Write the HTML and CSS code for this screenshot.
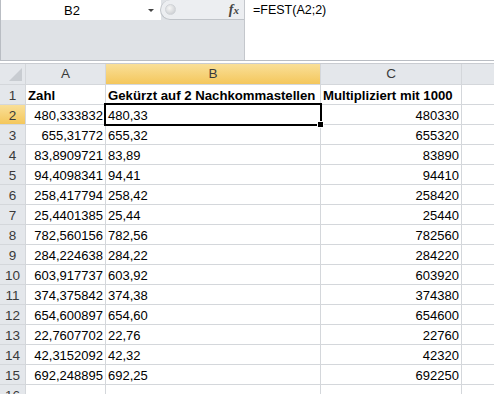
FILE: index.html
```html
<!DOCTYPE html>
<html lang="de">
<head>
    <meta charset="UTF-8">
    <title>FEST</title>
    <link rel="stylesheet" href="styles.css">
</head>
<body>
<div class="formula-bar">
    <div class="name-side">
        <div class="name-row">
            <div class="name-box">
                <span class="cell-ref">B2</span>
                <span class="arrow"></span>
            </div>
            <div class="knob-area">
                <span class="knob"></span>
                <span class="fx">f<i>x</i></span>
            </div>
        </div>
    </div>
    <div class="formula-input">=FEST(A2;2)</div>
</div>
<div class="strip"></div>
<div class="sheet">
    <div class="corner"></div>
    <div class="col-head">A</div>
    <div class="col-head sel">B</div>
    <div class="col-head">C</div>
    <div class="col-head"></div>

    <div class="row-head">1</div>
    <div class="cell bold">Zahl</div>
    <div class="cell bold">Gekürzt auf 2 Nachkommastellen</div>
    <div class="cell bold">Multipliziert mit 1000</div>
    <div class="cell"></div>
</div>
<script>
    const data = [
        ['480,333832', '480,33', '480330'],
        ['655,31772', '655,32', '655320'],
        ['83,8909721', '83,89', '83890'],
        ['94,4098341', '94,41', '94410'],
        ['258,417794', '258,42', '258420'],
        ['25,4401385', '25,44', '25440'],
        ['782,560156', '782,56', '782560'],
        ['284,224638', '284,22', '284220'],
        ['603,917737', '603,92', '603920'],
        ['374,375842', '374,38', '374380'],
        ['654,600897', '654,60', '654600'],
        ['22,7607702', '22,76', '22760'],
        ['42,3152092', '42,32', '42320'],
        ['692,248895', '692,25', '692250']
    ];
    const sheet = document.querySelector('.sheet');

    function addCell(cls, text) {
        const div = document.createElement('div');
        div.className = cls;
        div.textContent = text;
        sheet.appendChild(div);
        return div;
    }

    data.forEach((row, i) => {
        const n = i + 2;
        addCell(n === 2 ? 'row-head sel' : 'row-head', n);
        addCell('cell num', row[0]);
        addCell(n === 2 ? 'cell active' : 'cell', row[1]);
        addCell('cell num', row[2]);
        addCell('cell', '');
    });

    addCell('row-head', 16);
    for (let i = 0; i < 4; i++) addCell('cell', '');
</script>
</body>
</html>
```

FILE: styles.css
```css
body {
    margin: 0;
    font-family: "Liberation Sans", Arial, sans-serif;
    background-color: #ffffff;
    overflow: hidden;
}

.formula-bar {
    display: flex;
    height: 60px;
    border-bottom: 1px solid #b9bdc3;
}

.name-side {
    width: 244px;
    background-color: #dfe2e6;
    border-left: 1px solid #b9bdc3;
    box-sizing: border-box;
}

.name-row {
    display: flex;
    height: 20px;
}

.name-box {
    width: 160px;
    background-color: #ffffff;
    display: flex;
    align-items: center;
}

.cell-ref {
    width: 142px;
    text-align: center;
    font-size: 13px;
    color: #000;
}

.arrow {
    margin-left: 5px;
    width: 0;
    height: 0;
    border-left: 3px solid transparent;
    border-right: 3px solid transparent;
    border-top: 3px solid #444;
}

.knob-area {
    flex: 1;
    display: flex;
    align-items: center;
    justify-content: space-between;
    background-color: #eceef1;
    border: 1px solid #c0c4c9;
    border-right: none;
    border-top: none;
    border-radius: 10px 0 0 10px;
    margin-left: -1px;
}

.knob {
    width: 9px;
    height: 9px;
    margin-left: 4px;
    border-radius: 50%;
    background: radial-gradient(circle at 40% 35%, #f6f6f6, #c4c7cb);
    border: 1px solid #d0d3d7;
}

.fx {
    font-family: "Liberation Serif", serif;
    font-style: italic;
    font-weight: bold;
    font-size: 14px;
    color: #444;
    margin-right: 5px;
}

.fx i {
    font-size: 11px;
}

.formula-input {
    flex: 1;
    background-color: #ffffff;
    border-left: 1px solid #c4c7cc;
    padding: 3px 0 0 8px;
    font-size: 12.5px;
    color: #000;
}

.strip {
    height: 2px;
    border-bottom: 1px solid #c9ccd1;
}

.sheet {
    display: grid;
    grid-template-columns: 25px 79px 214px 140px 1fr;
    grid-template-rows: 20px;
    grid-auto-rows: 19px;
    gap: 1px;
    background-color: #d4d7db;
}

.corner,
.col-head,
.row-head {
    background-color: #e4e7eb;
    color: #3a3a3a;
    font-size: 13.5px;
}

.corner {
    position: relative;
}

.corner::after {
    content: "";
    position: absolute;
    right: 3px;
    bottom: 3px;
    border-left: 13px solid transparent;
    border-bottom: 13px solid #c8ccd1;
}

.col-head {
    text-align: center;
    line-height: 20px;
}

.row-head {
    text-align: center;
    line-height: 19px;
    padding-top: 1px;
}

.col-head.sel,
.row-head.sel {
    background: linear-gradient(#f9df98, #f4c75c);
}

.cell {
    background-color: #ffffff;
    font-size: 13px;
    line-height: 19px;
    padding: 1px 2px 0;
    color: #000;
    white-space: nowrap;
}

.bold {
    font-weight: bold;
    font-size: 13.2px;
}

.num {
    text-align: right;
}

.active {
    position: relative;
    outline: 2px solid #000;
}

.active::after {
    content: "";
    position: absolute;
    right: -4px;
    bottom: -4px;
    width: 5px;
    height: 5px;
    background-color: #000;
    border: 1px solid #fff;
}
```
